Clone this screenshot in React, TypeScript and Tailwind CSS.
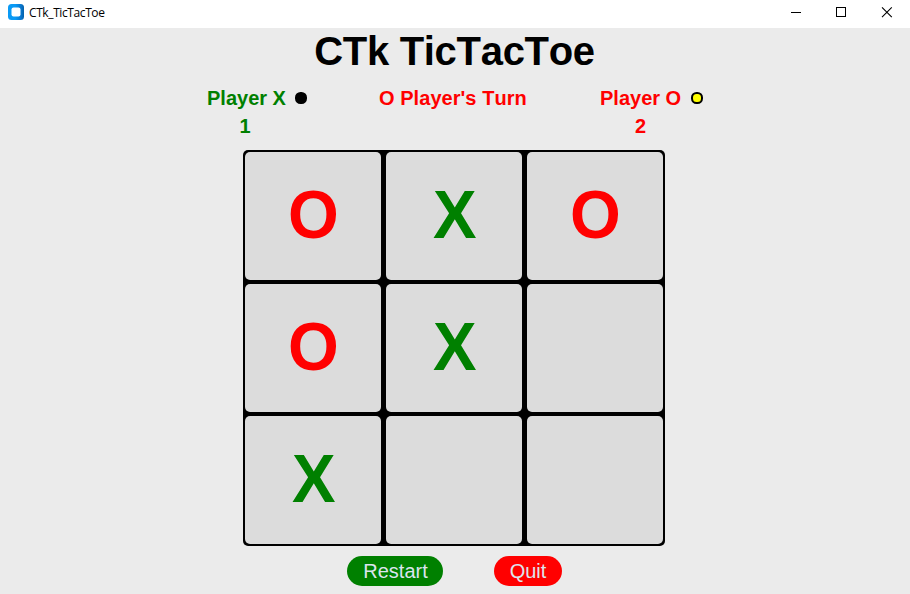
type Mark = 'X' | 'O' | '';

const board: Mark[] = ['O', 'X', 'O', 'O', 'X', '', 'X', '', ''];

function TitleBar() {
  return (
    <header className="flex h-7 items-start bg-white">
      <svg className="mt-1 ml-2" width="16" height="16" viewBox="0 0 16 16">
        <defs>
          <linearGradient id="logo" x1="0" y1="0" x2="1" y2="0">
            <stop offset="0.45" stopColor="#0a9af5" />
            <stop offset="0.8" stopColor="#0878d0" />
            <stop offset="1" stopColor="#0560a8" />
          </linearGradient>
        </defs>
        <rect width="16" height="16" rx="3.5" fill="url(#logo)" />
        <rect x="3.5" y="3.5" width="9" height="9" rx="2" fill="#fff" />
      </svg>
      <span className="mt-[5px] ml-[5px] font-['Open_Sans',sans-serif] text-[12px] leading-4 tracking-[-0.4px] text-black">
        CTk_TicTacToe
      </span>
      <svg
        className="ml-auto"
        width="138"
        height="28"
        viewBox="0 0 138 28"
        fill="none"
        stroke="#000"
      >
        <path d="M19 12.5h10M64.5 7.5h9v9h-9z" shapeRendering="crispEdges" />
        <path d="M110 7.3l9.8 9.8M119.8 7.3l-9.8 9.8" strokeWidth="1.1" />
      </svg>
    </header>
  );
}

function Player({ name, score, color, light, className }: {
  name: string;
  score: number;
  color: string;
  light: string;
  className: string;
}) {
  return (
    <div className={`${className} ${color}`}>
      <div className="flex h-7 items-center">
        <span className="w-[78px]">{name}</span>
        <span className={`size-3 rounded-[5.5px] border-2 border-black ${light}`} />
      </div>
      <div className="h-7 w-[76px] text-center leading-7">{score}</div>
    </div>
  );
}

function Cell({ mark }: { mark: Mark }) {
  return (
    <div
      className={`flex h-32 w-[136px] items-center justify-center rounded-[5px] bg-[#dcdcdc] pb-[5px] pl-px text-[68px] leading-none font-bold ${
        mark === 'X' ? 'text-[#008000]' : 'text-[#ff0000]'
      }`}
    >
      <span className="scale-x-[0.96]">{mark}</span>
    </div>
  );
}

export default function App() {
  return (
    <div className="flex h-[594px] w-[910px] flex-col overflow-hidden bg-[#ebebeb] font-['Liberation_Sans',Arial,sans-serif] [font-kerning:none]">
      <TitleBar />
      <h1 className="h-[56px] pr-px text-center text-[40px] leading-[46px] font-bold tracking-[-0.3px] text-black">
        CTk TicTacToe
      </h1>
      <section className="flex h-[66px] items-start text-[20px] leading-7 font-bold whitespace-nowrap">
        <Player name="Player X" score={1} color="text-[#008000]" light="bg-black" className="ml-[207px] w-[172px] [&>div>span+span]:ml-[10px]" />
        <div className="w-[221px] tracking-[0.05px] text-[#ff0000]">O Player's Turn</div>
        <Player name="Player O" score={2} color="text-[#ff0000]" light="bg-[#ffff00]" className="[&>div>span+span]:ml-[13px] [&>div+div]:w-[81px]" />
      </section>
      <main className="ml-[243px] grid h-[396px] w-[422px] grid-cols-[repeat(3,136px)] gap-x-[5px] gap-y-1 rounded-[5px] bg-black p-0.5">
        {board.map((mark, i) => (
          <Cell key={i} mark={mark} />
        ))}
      </main>
      <footer className="mt-[10px] ml-[347px] flex gap-[51px] text-[20px] leading-[30px] text-[#dce4ee]">
        <button className="h-[30px] w-24 rounded-full bg-[#008000] pl-px">Restart</button>
        <button className="h-[30px] w-[68px] rounded-full bg-[#ff0000]">Quit</button>
      </footer>
    </div>
  );
}
